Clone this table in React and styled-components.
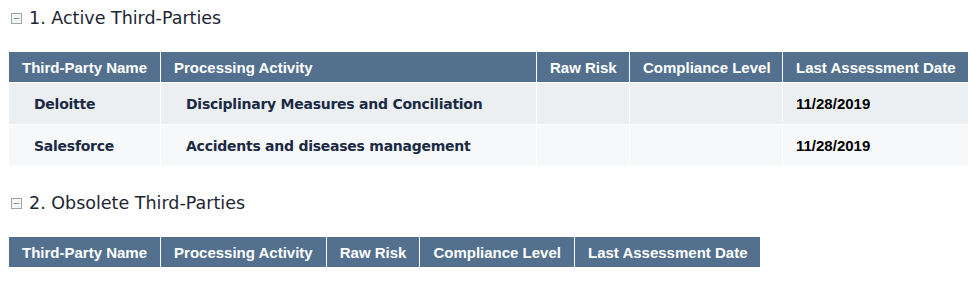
import React from 'react'
import styled, { createGlobalStyle } from 'styled-components'

const GlobalStyle = createGlobalStyle`
  body {
    margin: 0;
    background: #ffffff;
    font-family: "DejaVu Sans", Verdana, sans-serif;
  }
`

const activeRows = [
  { name: 'Deloitte', activity: 'Disciplinary Measures and Conciliation', date: '11/28/2019' },
  { name: 'Salesforce', activity: 'Accidents and diseases management', date: '11/28/2019' },
]

const columns = [
  { label: 'Third-Party Name', width: 151 },
  { label: 'Processing Activity', width: 375 },
  { label: 'Raw Risk', width: 92 },
  { label: 'Compliance Level', width: 152 },
  { label: 'Last Assessment Date', width: 185 },
]

function CollapseIcon() {
  return (
    <svg width="11" height="11" viewBox="0 0 11 11">
      <rect x="0.5" y="0.5" width="10" height="10" fill="#f4f6f5" stroke="#9ba6a2" />
      <rect x="2.5" y="5" width="6" height="1" fill="#8c9692" />
    </svg>
  )
}

function App() {
  return (
    <Page>
      <GlobalStyle />

      <Heading>
        <CollapseIcon />
        <span>1. Active Third-Parties</span>
      </Heading>
      <Table $full>
        <thead>
          <tr>
            {columns.map((c) => (
              <Th key={c.label} style={{ width: c.width }}>{c.label}</Th>
            ))}
          </tr>
        </thead>
        <tbody>
          {activeRows.map((r, i) => (
            <Row key={r.name} $odd={i % 2 === 0}>
              <Td><Name>{r.name}</Name></Td>
              <Td><Name>{r.activity}</Name></Td>
              <Td />
              <Td />
              <Td><DateText>{r.date}</DateText></Td>
            </Row>
          ))}
        </tbody>
      </Table>

      <Heading $gap>
        <CollapseIcon />
        <span>2. Obsolete Third-Parties</span>
      </Heading>
      <Table>
        <thead>
          <tr>
            {columns.map((c) => (
              <Th key={c.label}>{c.label}</Th>
            ))}
          </tr>
        </thead>
      </Table>
    </Page>
  )
}

const Page = styled.div`
  padding: 0 8px;
`

const Heading = styled.div`
  display: flex;
  align-items: center;
  gap: 7px;
  height: 20px;
  margin: ${(p) => (p.$gap ? '26px' : '8px')} 0 0 3px;
  font-size: 17.5px;
  color: #1d2533;
`

const Table = styled.table`
  width: ${(p) => (p.$full ? '960px' : 'auto')};
  margin-top: 23px;
  border-collapse: separate;
  border-spacing: 1px;
  background: #ffffff;
  table-layout: ${(p) => (p.$full ? 'fixed' : 'auto')};
`

const Th = styled.th`
  height: 30px;
  padding: 0 13px;
  box-sizing: border-box;
  background: #53718f;
  color: #ffffff;
  font-family: "Liberation Sans", Arial, sans-serif;
  font-size: 15px;
  font-weight: bold;
  text-align: left;
  white-space: nowrap;
`

const Row = styled.tr`
  background: ${(p) => (p.$odd ? '#eceff2' : '#f7f8fa')};
`

const Td = styled.td`
  height: 41px;
  padding: 0 13px;
  box-sizing: border-box;
  vertical-align: middle;
  white-space: nowrap;
`

const Name = styled.span`
  display: inline-block;
  padding-left: 12px;
  font-family: "DejaVu Sans", Verdana, sans-serif;
  font-size: 14px;
  font-weight: bold;
  letter-spacing: -0.25px;
  color: #1b2a44;
`

const DateText = styled.span`
  font-family: "Liberation Sans", Arial, sans-serif;
  font-size: 15px;
  font-weight: bold;
  color: #000000;
`

export default App
